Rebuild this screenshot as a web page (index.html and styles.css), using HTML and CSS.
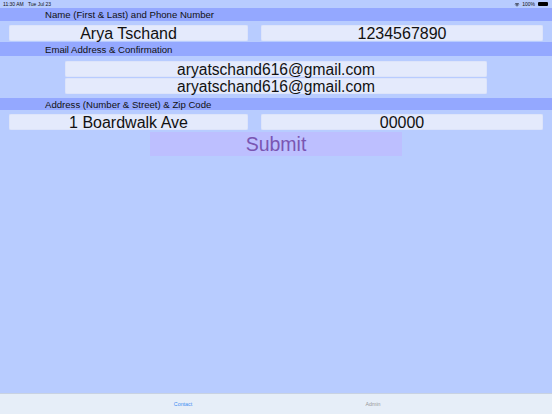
FILE: index.html
```html
<!DOCTYPE html>
<html>
<head>
<meta charset="utf-8">
<link rel="stylesheet" href="styles.css">
</head>
<body>
<div class="screen">
  <div class="status">
    <span class="time">11:30 AM&nbsp;&nbsp;&nbsp;Tue Jul 23</span>
    <span class="sys">
      <svg class="wifi" viewBox="0 0 10 8" width="6" height="5"><path d="M5 7.5 L3.6 6 A2 2 0 0 1 6.4 6 Z" fill="#000"/><path d="M2.4 4.8 A3.8 3.8 0 0 1 7.6 4.8 L6.9 5.5 A2.8 2.8 0 0 0 3.1 5.5 Z" fill="#000"/><path d="M1 3.4 A5.8 5.8 0 0 1 9 3.4 L8.3 4.1 A4.8 4.8 0 0 0 1.7 4.1 Z" fill="#000"/></svg>
      <span>100%</span>
      <span class="batt"></span>
    </span>
  </div>
  <main class="form">
    <div class="band">Name (First &amp; Last) and Phone Number</div>
    <div class="pair">
      <div class="field left">Arya Tschand</div>
      <div class="field right">1234567890</div>
    </div>
    <div class="band band-email">Email Address &amp; Confirmation</div>
    <div class="stack">
      <div class="field wide">aryatschand616@gmail.com</div>
      <div class="field wide">aryatschand616@gmail.com</div>
    </div>
    <div class="band band-addr">Address (Number &amp; Street) &amp; Zip Code</div>
    <div class="pair pair-addr">
      <div class="field left">1 Boardwalk Ave</div>
      <div class="field right">00000</div>
    </div>
    <div class="submit-wrap"><div class="submit">Submit</div></div>
  </main>
  <nav class="tabbar">
    <div class="tabs">
      <div class="tab active">Contact</div>
      <div class="tab">Admin</div>
    </div>
  </nav>
</div>
</body>
</html>
```
FILE: styles.css
```css
html, body {
  margin: 0;
  padding: 0;
}
body {
  background: #b8ccff;
  font-family: "Liberation Sans", Arial, sans-serif;
  color: #000;
}
.screen {
  width: 552px;
  height: 414px;
  display: flex;
  flex-direction: column;
  overflow: hidden;
}
.status {
  height: 8px;
  display: flex;
  justify-content: space-between;
  align-items: center;
  font-size: 5px;
  padding: 0 4px 0 3px;
  color: #111;
}
.sys {
  display: flex;
  align-items: center;
  gap: 2px;
}
.batt {
  width: 10px;
  height: 3.5px;
  border-radius: 1px;
  background: #000;
  margin-left: 1px;
}
.form {
  flex: 1;
  display: flex;
  flex-direction: column;
}
.band {
  background: #94a8ff;
  height: 13px;
  line-height: 14px;
  font-size: 9.6px;
  padding-left: 45px;
  color: #111;
}
.band-email {
  margin-top: 1px;
  height: 14px;
  line-height: 15px;
}
.band-addr {
  margin-top: 4px;
  height: 12px;
  line-height: 13px;
}
.pair {
  display: flex;
  gap: 13px;
  padding-left: 9px;
  margin-top: 4px;
}
.pair-addr {
  margin-top: 4px;
}
.field {
  height: 16px;
  line-height: 17px;
  background: #e4eafc;
  border-radius: 2px;
  text-align: center;
  font-size: 16px;
  color: #111;
  box-shadow: inset 0 0 0 0.5px #d6def8;
}
.left {
  width: 239px;
}
.right {
  width: 282px;
}
.stack {
  display: flex;
  flex-direction: column;
  align-items: center;
  gap: 1px;
  margin-top: 5px;
}
.wide {
  width: 422px;
  height: 16px;
  font-size: 15.6px;
}
.submit-wrap {
  display: flex;
  justify-content: center;
  margin-top: 2px;
}
.submit {
  width: 252px;
  height: 24px;
  line-height: 25px;
  background: #bdbfff;
  color: #7a56b2;
  text-align: center;
  font-size: 19.5px;
}
.tabbar {
  height: 20px;
  background: #e6eef8;
  border-top: 0.5px solid #c8d2e2;
  display: flex;
  justify-content: center;
  padding-left: 4px;
}
.tabs {
  display: flex;
  width: 380px;
}
.tab {
  flex: 1;
  text-align: center;
  font-size: 5.3px;
  line-height: 20px;
  color: #999;
}
.tab.active {
  color: #3d8df2;
}
```
